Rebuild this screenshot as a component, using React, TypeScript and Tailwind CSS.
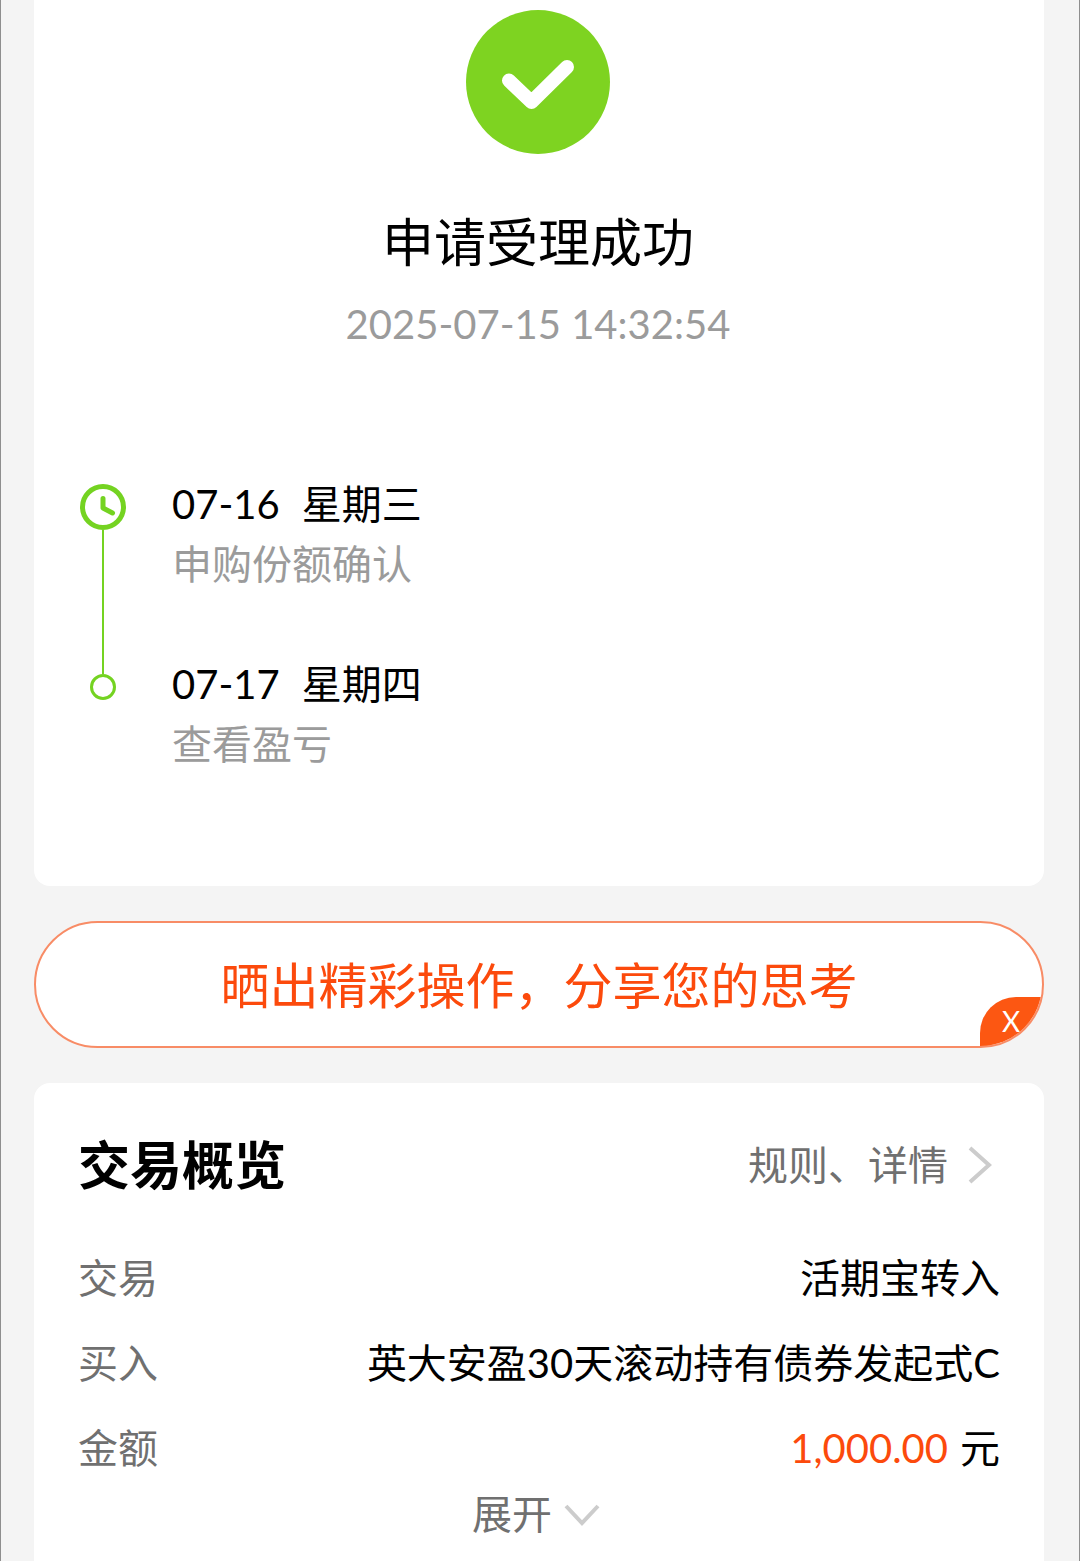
const steps = [
  { date: '07-16', weekday: '星期三', note: '申购份额确认' },
  { date: '07-17', weekday: '星期四', note: '查看盈亏' },
]

export default function App() {
  return (
    <main className="min-h-screen border-x border-[#8e8e8e] bg-[#f4f4f4] pl-[33px] pr-[35px] font-['Lato','Noto_Sans_CJK_SC',sans-serif] text-[40px] leading-[60px] text-black">
      <Result />
      <Share />
      <Overview />
    </main>
  )
}

function Result() {
  return (
    <section className="rounded-b-2xl bg-white px-[46px] pt-[10px] pb-28">
      <div className="flex flex-col items-center pr-[2px]">
        <SuccessIcon className="size-36" />
        <h1 className="mt-[52px] text-[52px] leading-[72px]">申请受理成功</h1>
        <time className="mt-4 text-[#9b9b9b]">2025-07-15 14:32:54</time>
      </div>
      <ol className="mt-[120px]">
        {steps.map((step, i) => (
          <li key={step.date} className="flex gap-[46px]">
            <div className="flex w-[46px] flex-col items-center">
              {i === 0 ? (
                <>
                  <ClockIcon className="mt-[10px] size-[46px] shrink-0" />
                  <span className="w-[2px] flex-1 bg-[#74d321]" />
                </>
              ) : (
                <>
                  <span className="h-5 w-[2px] bg-[#74d321]" />
                  <span className="size-[26px] rounded-full border-3 border-[#74d321]" />
                </>
              )}
            </div>
            <div className={i === 0 ? 'pb-[60px]' : ''}>
              <p className="flex gap-[22px]">
                <span>{step.date}</span>
                <span>{step.weekday}</span>
              </p>
              <p className="text-[#9b9b9b]">{step.note}</p>
            </div>
          </li>
        ))}
      </ol>
    </section>
  )
}

function Share() {
  return (
    <section className="relative mt-[35px] overflow-hidden rounded-full border-2 border-[#f88c66] bg-white">
      <button type="button" className="block h-[123px] w-full text-[49px] text-[#fc4a0c]">
        晒出精彩操作，分享您的思考
      </button>
      <button
        type="button"
        aria-label="关闭"
        className="absolute right-0 bottom-0 h-[49px] w-[62px] rounded-tl-[36px] bg-[#fc5712] text-[28px] leading-[49px] text-white"
      >
        X
      </button>
    </section>
  )
}

function Overview() {
  return (
    <section className="mt-[35px] rounded-t-2xl bg-white px-11 pt-11 pb-[23px]">
      <div className="flex h-[76px] items-center justify-between">
        <h2 className="text-[52px] font-bold">交易概览</h2>
        <a href="#rules" className="mr-2 flex items-center gap-5 text-[#707070]">
          规则、详情
          <ChevronRight className="h-10 w-6" />
        </a>
      </div>
      <dl className="mt-8">
        <Row label="交易">活期宝转入</Row>
        <Row label="买入">英大安盈30天滚动持有债券发起式C</Row>
        <Row label="金额">
          <span className="mr-3 text-[#fc4a0c]">1,000.00</span>
          元
        </Row>
      </dl>
      <div className="flex justify-center pr-[6px]">
        <button type="button" className="flex h-12 items-center gap-3 text-[#707070]">
          展开
          <ChevronDown className="h-6 w-9" />
        </button>
      </div>
    </section>
  )
}

function Row({ label, children }: { label: string; children: React.ReactNode }) {
  return (
    <div className="flex h-[85px] items-center justify-between">
      <dt className="text-[#707070]">{label}</dt>
      <dd>{children}</dd>
    </div>
  )
}

function SuccessIcon(props: any) {
  return (
    <svg {...props} viewBox="0 0 144 144" fill="none">
      <circle cx="72" cy="72" r="72" fill="#7ed321" />
      <path d="M43 70.5L65.5 92L101 57" stroke="white" strokeWidth="14" strokeLinecap="round" strokeLinejoin="round" />
    </svg>
  )
}

function ClockIcon(props: any) {
  return (
    <svg {...props} viewBox="0 0 46 46" fill="none" stroke="#74d321" strokeWidth="5">
      <circle cx="23" cy="23" r="20.5" />
      <path d="M23 14.5V24l9.5 5" strokeLinecap="round" strokeLinejoin="round" />
    </svg>
  )
}

function ChevronRight(props: any) {
  return (
    <svg {...props} viewBox="0 0 24 40" fill="none" stroke="#cccccc" strokeWidth="4">
      <path d="M2 3l19 17L2 37" />
    </svg>
  )
}

function ChevronDown(props: any) {
  return (
    <svg {...props} viewBox="0 0 36 24" fill="none" stroke="#cccccc" strokeWidth="4">
      <path d="M2 4l16 17L34 4" />
    </svg>
  )
}
